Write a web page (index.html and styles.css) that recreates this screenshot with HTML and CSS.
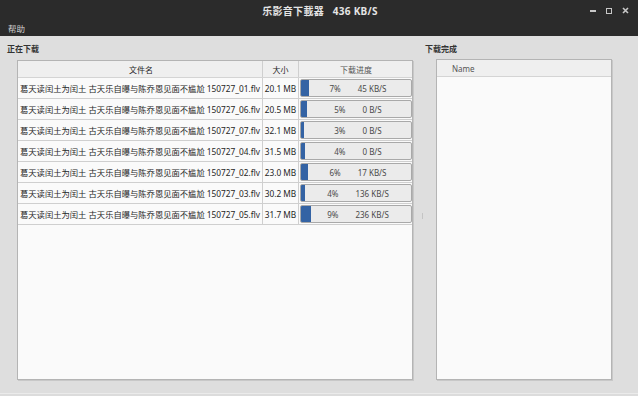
FILE: index.html
```html
<!DOCTYPE html>
<html>
<head>
<meta charset="utf-8">
<link rel="stylesheet" href="styles.css">
</head>
<body>
<div class="titlebar">
  <div class="title-row">
    <span class="title">乐影音下載器&nbsp;&nbsp;&nbsp;436 KB/S</span>
    <div class="controls">
      <span class="ctl-min"></span>
      <span class="ctl-max"></span>
      <svg class="ctl-close" width="7" height="7" viewBox="0 0 7 7"><path d="M1 1L6 6M6 1L1 6" stroke="#c8c8c8" stroke-width="1.6"/></svg>
    </div>
  </div>
  <div class="menu-row"><span class="menu-item">帮助</span></div>
</div>
<div class="main">
  <div class="pane left">
    <div class="pane-label">正在下载</div>
    <div class="box">
      <div class="hrow">
        <div class="c-name hcell">文件名</div>
        <div class="c-size hcell">大小</div>
        <div class="c-prog hcell">下载进度</div>
      </div>
      <div class="row"><div class="c-name">葛天读闰土为闰土 古天乐自曝与陈乔恩见面不尴尬 150727_01.flv</div><div class="c-size">20.1 MB</div><div class="c-prog"><div class="bar" style="--w:7%"><span>7%</span><span>45 KB/S</span></div></div></div>
      <div class="row"><div class="c-name">葛天读闰土为闰土 古天乐自曝与陈乔恩见面不尴尬 150727_06.flv</div><div class="c-size">20.5 MB</div><div class="c-prog"><div class="bar" style="--w:5%"><span>5%</span><span>0 B/S</span></div></div></div>
      <div class="row"><div class="c-name">葛天读闰土为闰土 古天乐自曝与陈乔恩见面不尴尬 150727_07.flv</div><div class="c-size">32.1 MB</div><div class="c-prog"><div class="bar" style="--w:3%"><span>3%</span><span>0 B/S</span></div></div></div>
      <div class="row"><div class="c-name">葛天读闰土为闰土 古天乐自曝与陈乔恩见面不尴尬 150727_04.flv</div><div class="c-size">31.5 MB</div><div class="c-prog"><div class="bar" style="--w:4%"><span>4%</span><span>0 B/S</span></div></div></div>
      <div class="row"><div class="c-name">葛天读闰土为闰土 古天乐自曝与陈乔恩见面不尴尬 150727_02.flv</div><div class="c-size">23.0 MB</div><div class="c-prog"><div class="bar" style="--w:6%"><span>6%</span><span>17 KB/S</span></div></div></div>
      <div class="row"><div class="c-name">葛天读闰土为闰土 古天乐自曝与陈乔恩见面不尴尬 150727_03.flv</div><div class="c-size">30.2 MB</div><div class="c-prog"><div class="bar" style="--w:4%"><span>4%</span><span>136 KB/S</span></div></div></div>
      <div class="row"><div class="c-name">葛天读闰土为闰土 古天乐自曝与陈乔恩见面不尴尬 150727_05.flv</div><div class="c-size">31.7 MB</div><div class="c-prog"><div class="bar" style="--w:9%"><span>9%</span><span>236 KB/S</span></div></div></div>
    </div>
  </div>
  <div class="sep"><span class="grip"></span></div>
  <div class="pane right">
    <div class="pane-label">下载完成</div>
    <div class="box">
      <div class="hrow"><div class="hcell name-h">Name</div></div>
    </div>
  </div>
</div>
<div class="status"></div>
</body>
</html>
```

FILE: styles.css
```css
html, body {
  margin: 0;
  padding: 0;
}
body {
  width: 638px;
  height: 396px;
  overflow: hidden;
  background: #dedede;
  font-family: "Noto Sans", "Noto Sans CJK SC", sans-serif;
  font-size: 8px;
  color: #333;
}
.titlebar {
  height: 36px;
  background: #2b2b2b;
  display: flex;
  flex-direction: column;
}
.title-row {
  height: 21px;
  position: relative;
  display: flex;
  align-items: center;
  justify-content: center;
}
.title {
  color: #e4e4e4;
  font-weight: bold;
  font-size: 10px;
  letter-spacing: 0.3px;
  padding-left: 2px;
}
.controls {
  position: absolute;
  right: 9px;
  top: 7px;
  display: flex;
  align-items: center;
  gap: 10px;
}
.ctl-min {
  width: 6px;
  height: 2px;
  background: #c8c8c8;
  margin-top: 1px;
}
.ctl-max {
  width: 4px;
  height: 4px;
  border: 1.5px solid #c8c8c8;
}
.menu-row {
  height: 13px;
  display: flex;
  align-items: center;
  padding-left: 8px;
}
.menu-item {
  color: #d0d0d0;
  font-size: 8.5px;
}
.main {
  display: flex;
  height: 351px;
  padding-top: 7px;
  box-sizing: border-box;
}
.pane {
  display: flex;
  flex-direction: column;
}
.pane.left {
  margin-left: 7px;
  width: 406px;
}
.pane.right {
  width: 187px;
}
.pane-label {
  height: 17px;
  line-height: 12px;
  font-weight: bold;
  font-size: 8px;
  color: #333;
}
.pane.right .pane-label {
  height: 16px;
}
.box {
  flex: 1;
  margin-left: 10px;
  background: #fafafa;
  border: 1px solid #b4b4b4;
  box-shadow: 1px 1px 0 #c8c8c8;
  margin-bottom: 7px;
}
.right .box {
  margin-left: 11px;
}
.hrow {
  display: flex;
  height: 16px;
  background: #efefef;
  border-bottom: 1px solid #d4d4d4;
}
.hcell {
  display: flex;
  align-items: center;
  justify-content: center;
  color: #555;
  border-right: 1px solid #dadada;
}
.hcell:last-child {
  border-right: none;
}
.name-h {
  justify-content: flex-start;
  padding-left: 15px;
}
.row {
  display: flex;
  height: 21px;
  border-bottom: 1px solid #cfcfcf;
  box-sizing: border-box;
  font-size: 8.3px;
}
.c-name {
  width: 245px;
  padding-left: 2px;
  box-sizing: border-box;
  border-right: 1px solid #cfcfcf;
  white-space: nowrap;
  overflow: hidden;
  display: flex;
  align-items: center;
  color: #262626;
}
.c-size {
  width: 36px;
  box-sizing: border-box;
  border-right: 1px solid #cfcfcf;
  display: flex;
  align-items: center;
  justify-content: center;
  color: #262626;
}
.hrow .c-name {
  justify-content: center;
}
.c-prog {
  flex: 1;
  display: flex;
  padding: 1px 0 1px 1px;
}
.bar {
  flex: 1;
  border: 1px solid #a9a9a9;
  border-radius: 2px;
  background: linear-gradient(to right, #3463a4 var(--w), #ebebeb var(--w));
  display: flex;
  align-items: center;
  justify-content: center;
  gap: 17px;
  color: #4a4a4a;
  font-size: 8px;
  padding-left: 4px;
}
.sep {
  width: 12px;
  display: flex;
  align-items: center;
  justify-content: center;
}
.grip {
  width: 1px;
  height: 6px;
  background: #c4c4c4;
  margin-left: 6px;
  margin-top: 2px;
}
.status {
  height: 10px;
  border-top: 1px solid #ebebeb;
  background: #dcdcdc;
  margin-top: 6px;
}
```
